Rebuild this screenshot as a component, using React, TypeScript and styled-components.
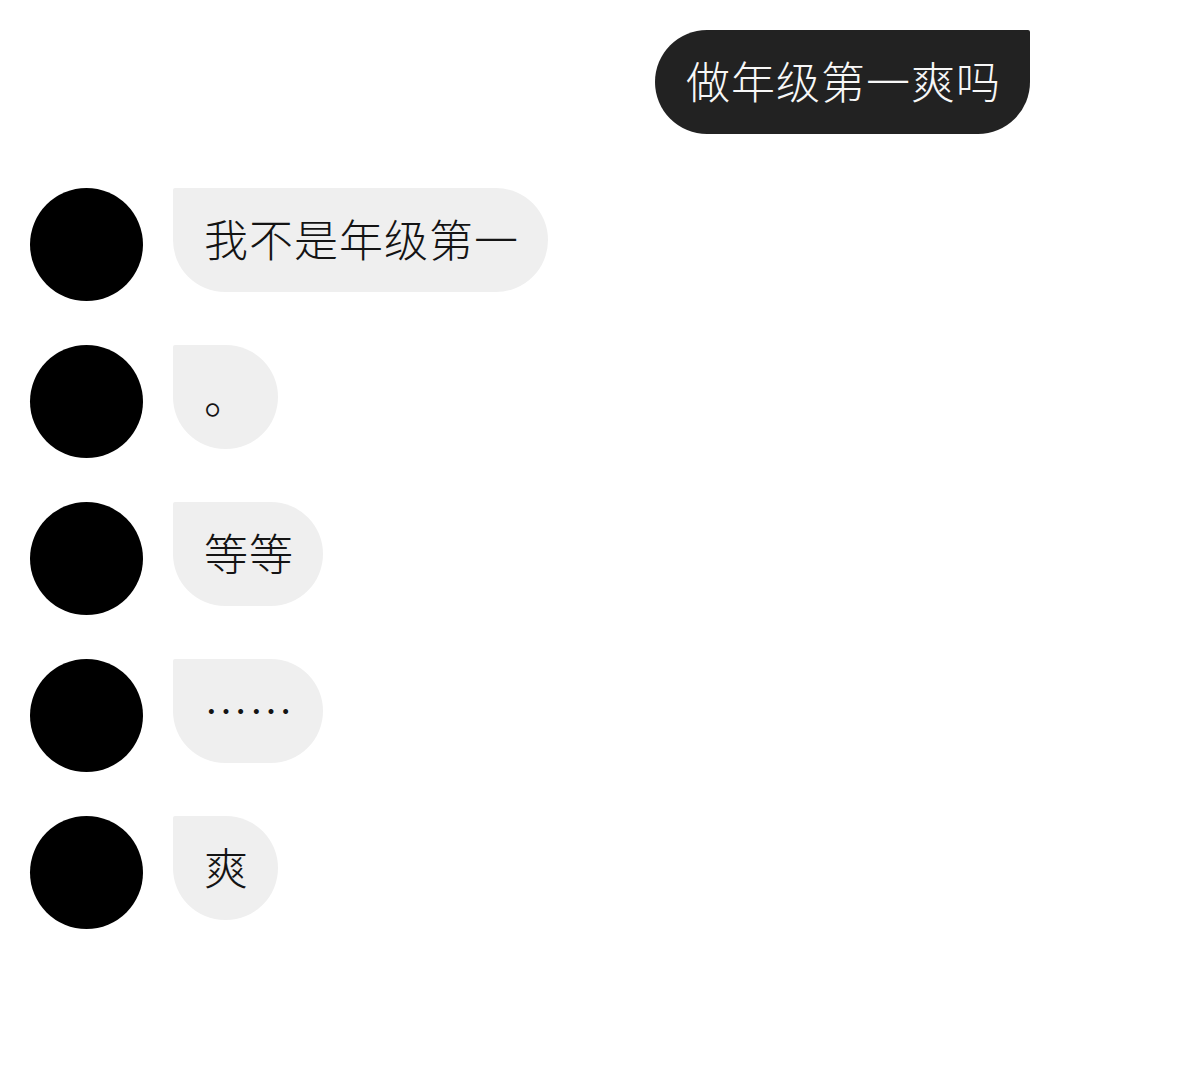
import React from "react";
import styled, { createGlobalStyle } from "styled-components";

const GlobalStyle = createGlobalStyle`
  html, body {
    margin: 0;
    padding: 0;
    background: #ffffff;
  }
  body {
    font-family: "Noto Sans CJK SC", "Noto Sans", sans-serif;
  }
`;

const Thread = styled.div`
  width: 1200px;
  min-height: 1072px;
  box-sizing: border-box;
  padding: 30px 170px 0 30px;
  display: flex;
  flex-direction: column;
`;

const SentRow = styled.div`
  display: flex;
  justify-content: flex-end;
  margin-bottom: 54px;
`;

const ReceivedList = styled.div`
  display: flex;
  flex-direction: column;
  gap: 44px;
`;

const ReceivedRow = styled.div`
  display: flex;
  align-items: flex-start;
  gap: 30px;
`;

const Avatar = styled.div`
  width: 113px;
  height: 113px;
  border-radius: 50%;
  background: #000000;
  flex: none;
`;

const Bubble = styled.div<{ $mine?: boolean }>`
  height: 104px;
  line-height: 100px;
  padding: 0 29px 4px 31px;
  font-size: 44px;
  font-weight: 300;
  letter-spacing: 1px;
  white-space: nowrap;
  box-sizing: border-box;
  background: ${(p) => (p.$mine ? "#222222" : "#efefef")};
  color: ${(p) => (p.$mine ? "#f7f7f7" : "#141414")};
  border-radius: ${(p) => (p.$mine ? "52px 2px 52px 52px" : "2px 52px 52px 52px")};
`;

const replies = ["我不是年级第一", "。", "等等", "……", "爽"];

export default function App() {
  return (
    <>
      <GlobalStyle />
      <Thread>
        <SentRow>
          <Bubble $mine>做年级第一爽吗</Bubble>
        </SentRow>
        <ReceivedList>
          {replies.map((text, i) => (
            <ReceivedRow key={i}>
              <Avatar />
              <Bubble>{text}</Bubble>
            </ReceivedRow>
          ))}
        </ReceivedList>
      </Thread>
    </>
  );
}
